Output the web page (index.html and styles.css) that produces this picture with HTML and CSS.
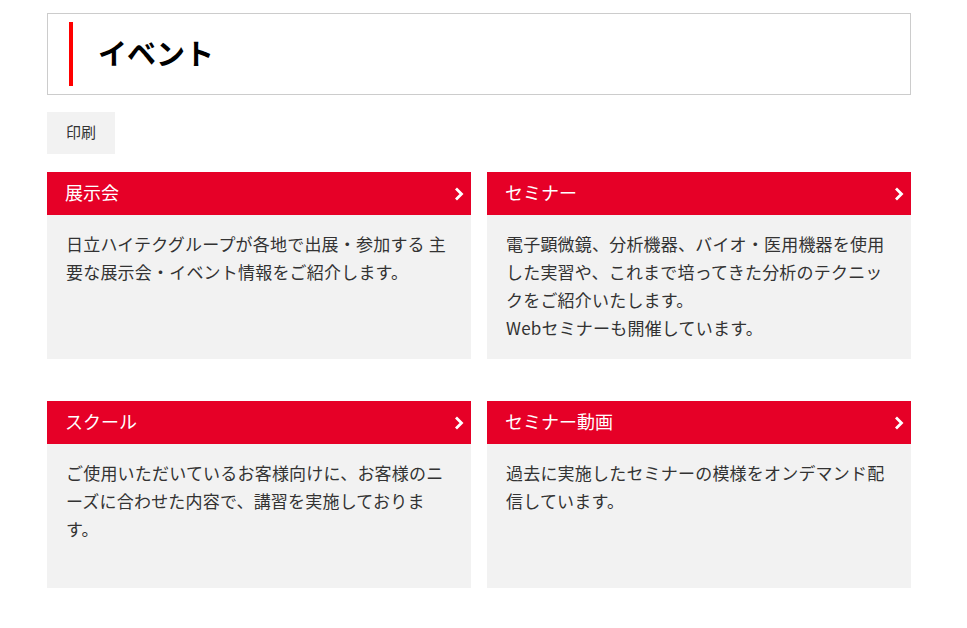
FILE: index.html
```html
<!DOCTYPE html>
<html lang="ja">

<head>
    <meta charset="UTF-8">
    <meta name="viewport" content="width=device-width, initial-scale=1.0">
    <title>イベント</title>
    <link rel="stylesheet" href="styles.css">
</head>

<body>
    <div class="page">
        <div class="page-title">
            <h1>イベント</h1>
        </div>

        <button class="print-button" type="button">印刷</button>

        <div class="card-grid">
            <a class="card" href="#">
                <div class="card-head">
                    <span>展示会</span>
                    <svg class="chevron" width="10" height="16" viewBox="0 0 10 16"><polyline points="2,2.5 7.5,8 2,13.5" /></svg>
                </div>
                <div class="card-body">
                    <p>日立ハイテクグループが各地で出展・参加する 主要な展示会・イベント情報をご紹介します。</p>
                </div>
            </a>
            <a class="card" href="#">
                <div class="card-head">
                    <span>セミナー</span>
                    <svg class="chevron" width="10" height="16" viewBox="0 0 10 16"><polyline points="2,2.5 7.5,8 2,13.5" /></svg>
                </div>
                <div class="card-body">
                    <p>電子顕微鏡、分析機器、バイオ・医用機器を使用した実習や、これまで培ってきた分析のテクニックをご紹介いたします。<br>Webセミナーも開催しています。</p>
                </div>
            </a>
            <a class="card" href="#">
                <div class="card-head">
                    <span>スクール</span>
                    <svg class="chevron" width="10" height="16" viewBox="0 0 10 16"><polyline points="2,2.5 7.5,8 2,13.5" /></svg>
                </div>
                <div class="card-body">
                    <p>ご使用いただいているお客様向けに、お客様のニーズに合わせた内容で、講習を実施しております。</p>
                </div>
            </a>
            <a class="card" href="#">
                <div class="card-head">
                    <span>セミナー動画</span>
                    <svg class="chevron" width="10" height="16" viewBox="0 0 10 16"><polyline points="2,2.5 7.5,8 2,13.5" /></svg>
                </div>
                <div class="card-body">
                    <p>過去に実施したセミナーの模様をオンデマンド配信しています。</p>
                </div>
            </a>
        </div>
    </div>
</body>

</html>
```

FILE: styles.css
```css
body {
    font-family: "Noto Sans CJK JP", "Noto Sans", sans-serif;
    background-color: #fff;
    color: #333;
    margin: 0;
    padding: 0;
}

.page {
    width: 864px;
    margin: 13px 0 0 47px;
}

/* Page heading with red accent bar */
.page-title {
    border: 1px solid #ccc;
    padding: 8px 21px;
    height: 64px;
    box-sizing: content-box;
}

.page-title h1 {
    margin: 0;
    height: 64px;
    border-left: 4px solid #f00;
    padding-left: 25px;
    font-size: 29px;
    font-weight: bold;
    line-height: 60px;
    color: #000;
}

.print-button {
    display: block;
    margin-top: 17px;
    width: 68px;
    height: 42px;
    border: none;
    background-color: #f2f2f2;
    color: #333;
    font-family: inherit;
    font-size: 15px;
    padding: 0 0 3px;
    cursor: pointer;
}

.card-grid {
    display: grid;
    grid-template-columns: 424px 424px;
    column-gap: 16px;
    row-gap: 42px;
    margin-top: 18px;
}

.card {
    display: block;
    text-decoration: none;
    color: inherit;
}

.card-head {
    display: flex;
    align-items: center;
    justify-content: space-between;
    height: 43px;
    box-sizing: border-box;
    padding: 0 7px 3px 18px;
    background-color: #e60027;
    color: #fff;
    font-size: 18px;
}

.chevron {
    fill: none;
    stroke: #fff;
    stroke-width: 2.8;
    margin-top: 4px;
}

.card-body {
    background-color: #f2f2f2;
    min-height: 144px;
    box-sizing: border-box;
    padding: 15px 19px;
}

.card-body p {
    margin: 0;
    font-size: 17px;
    line-height: 28px;
    letter-spacing: 0.2px;
}
```
